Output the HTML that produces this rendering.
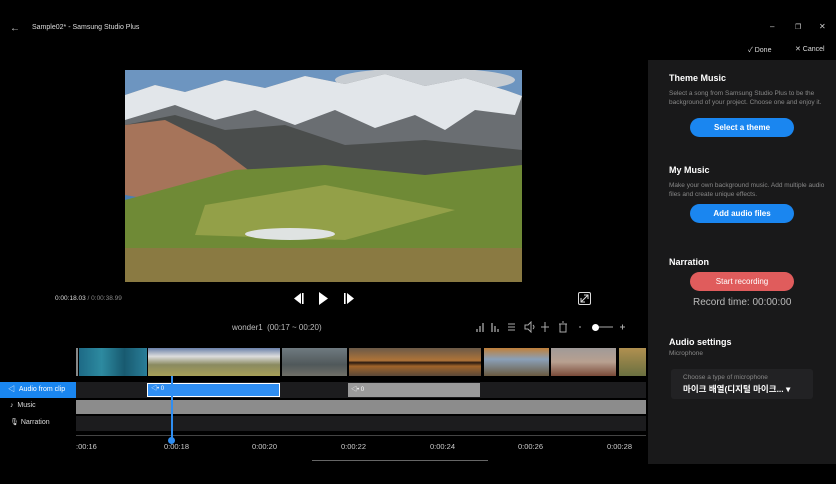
<!DOCTYPE html>
<html><head><meta charset="utf-8"><style>
*{margin:0;padding:0;box-sizing:border-box}
body{width:836px;height:484px;background:#000;font-family:"Liberation Sans","Noto Sans CJK KR",sans-serif;color:#ddd;position:relative;overflow:hidden;font-size:8px}
.a{position:absolute}
.btn{position:absolute;left:690px;width:104px;height:19px;border-radius:10px;background:#1a86f0;color:#fff;font-size:8px;text-align:center;line-height:19px;font-weight:bold}
.h{position:absolute;left:669px;font-size:9px;font-weight:bold;color:#fff}
.p{position:absolute;left:669px;font-size:6.5px;color:#888;line-height:9px;width:160px}
.thumb{position:absolute;top:348px;height:28px}
.tick{position:absolute;top:442px;font-size:7.5px;color:#ccc}
</style></head><body>
<div class="a" style="left:10px;top:23px;font-size:10px;color:#ccc">←</div>
<div class="a" style="left:32px;top:24px;font-size:7px;color:#ddd">Sample02* - Samsung Studio Plus</div>
<div class="a" style="left:770px;top:22px;font-size:8px;color:#ccc">–</div>
<div class="a" style="left:795px;top:23px;font-size:7px;color:#ccc">❐</div>
<div class="a" style="left:819px;top:22px;font-size:8px;color:#ccc">✕</div>
<div class="a" style="left:748px;top:45px;font-size:7px;color:#ddd">✓ Done</div>
<div class="a" style="left:795px;top:45px;font-size:7px;color:#ddd">✕ Cancel</div>

<!-- image -->
<div class="a" style="left:125px;top:70px;width:397px;height:212px;overflow:hidden;background:#4a7fb5">
<svg width="397" height="212" style="position:absolute;left:0;top:0">
<rect x="0" y="0" width="397" height="30" fill="#6d95c0"/>
<ellipse cx="300" cy="10" rx="90" ry="12" fill="#c8cdd2"/>
<polygon points="0,25 30,15 60,22 100,10 140,18 180,6 220,14 260,4 300,16 340,8 380,20 397,26 397,95 0,95" fill="#6a6e72"/>
<polygon points="0,25 30,15 60,22 100,10 140,18 180,6 220,14 260,4 300,16 340,8 380,20 397,26 390,45 350,40 320,60 290,45 250,58 210,40 170,55 130,40 90,50 50,35 0,50" fill="#e2e6ea"/>
<polygon points="0,55 50,45 100,60 160,55 220,75 300,70 397,80 397,110 0,110" fill="#4a4d4c"/>
<polygon points="0,55 40,50 90,75 130,105 60,135 0,125" fill="#a6745a"/>
<polygon points="0,130 110,100 200,95 300,105 397,95 397,212 0,212" fill="#6f8a36"/>
<polygon points="80,135 200,115 330,140 220,170 70,165" fill="#93a048"/>
<ellipse cx="165" cy="164" rx="45" ry="6" fill="#dfe3e2"/>
<rect x="0" y="178" width="397" height="34" fill="#8a7a42"/>
</svg></div>

<div class="a" style="left:55px;top:295px;font-size:6.5px;color:#ddd">0:00:18.03 <span style="color:#888">/ 0:00:38.99</span></div>
<svg class="a" style="left:292px;top:292px" width="64" height="13">
<polygon points="9,1 2,6.5 9,12" fill="#fff"/><rect x="10" y="1" width="1.6" height="11" fill="#fff"/>
<polygon points="27,0 36,6.5 27,13" fill="#fff"/>
<rect x="52" y="1" width="1.6" height="11" fill="#fff"/><polygon points="55,1 62,6.5 55,12" fill="#fff"/>
</svg>
<svg class="a" style="left:578px;top:292px" width="13" height="13"><rect x="0.5" y="0.5" width="12" height="12" rx="1.5" fill="none" stroke="#ddd"/><path d="M3,10 L10,3 M6,3 H10 V7 M3,6 V10 H7" stroke="#ddd" fill="none"/></svg>
<div class="a" style="left:232px;top:323px;font-size:8px;color:#bbb">wonder1 &nbsp;(00:17 ~ 00:20)</div>
<svg class="a" style="left:475px;top:321px" width="155" height="12" stroke="#aaa" fill="none">
<path d="M2,11V8 M5,11V5 M8,11V2" stroke-width="1.3"/>
<path d="M17,2V11 M20,5V11 M23,8V11" stroke-width="1.3"/>
<path d="M33,3H40 M33,6H40 M33,9H40"/>
<path d="M50,4H53L56,1V11L53,8H50Z M58,4Q60,6 58,8"/>
<path d="M70,1V11 M66,6H74"/>
<path d="M84,3H92 M85,3V11H91V3 M87,1H89"/>
<path d="M104,6H106"/>
<path d="M118,6H138"/>
<path d="M145,6H150 M147.5,3.5V8.5"/>
</svg>
<div class="a" style="left:592px;top:324px;width:7px;height:7px;border-radius:50%;background:#fff"></div>

<!-- thumbnails -->
<div class="thumb" style="left:76px;width:2px;background:#888"></div>
<div class="thumb" style="left:79px;width:68px;background:linear-gradient(90deg,#1d6a86,#2d8aa0,#185a70,#2a7e98)"></div>
<div class="thumb" style="left:148px;width:132px;background:linear-gradient(180deg,#6a80a8,#ddd 30%,#8a8a60 60%,#a8a058)"></div>
<div class="thumb" style="left:282px;width:65px;background:linear-gradient(180deg,#6f7a80,#50585a 60%,#707068)"></div>
<div class="thumb" style="left:349px;width:132px;background:linear-gradient(180deg,#6b5a48,#b07438 45%,#2a1a10 52%,#a0642a 65%,#5a4838)"></div>
<div class="thumb" style="left:484px;width:65px;background:linear-gradient(180deg,#c0803a,#8aa0b8 40%,#6a5a40)"></div>
<div class="thumb" style="left:551px;width:65px;background:linear-gradient(180deg,#a09a98,#b8a090 50%,#7a4a38)"></div>
<div class="thumb" style="left:619px;width:27px;background:linear-gradient(180deg,#b09050,#6a7040)"></div>

<!-- tracks -->
<div class="a" style="left:0;top:382px;width:76px;height:16px;background:#1a86f0;color:#fff;font-size:7px;line-height:16px;padding-left:8px">◁ &nbsp;Audio from clip</div>
<div class="a" style="left:76px;top:382px;width:570px;height:16px;background:#1c1c1e"></div>
<div class="a" style="left:147px;top:383px;width:133px;height:14px;background:#2f8ef2;border:1.5px solid #fff;font-size:6px;color:#fff;padding-left:3px;line-height:11px">◁• 0</div>
<div class="a" style="left:348px;top:383px;width:132px;height:14px;background:#9a9a9a;font-size:6px;color:#fff;padding-left:3px;line-height:14px">◁• 0</div>
<div class="a" style="left:10px;top:402px;font-size:7px;color:#ddd">♪ &nbsp;Music</div>
<div class="a" style="left:76px;top:400px;width:570px;height:14px;background:#8c8c8c"></div>
<div class="a" style="left:10px;top:418px;font-size:7px;color:#ddd">🎙 Narration</div>
<div class="a" style="left:76px;top:416px;width:570px;height:15px;background:#1c1c1e"></div>
<div class="a" style="left:76px;top:435px;width:570px;height:1px;background:#444"></div>
<div class="tick" style="left:76px">:00:16</div>
<div class="tick" style="left:164px">0:00:18</div>
<div class="tick" style="left:252px">0:00:20</div>
<div class="tick" style="left:341px">0:00:22</div>
<div class="tick" style="left:430px">0:00:24</div>
<div class="tick" style="left:518px">0:00:26</div>
<div class="tick" style="left:607px">0:00:28</div>
<div class="a" style="left:171px;top:376px;width:1.5px;height:66px;background:#2f8ef2"></div>
<div class="a" style="left:168px;top:437px;width:7px;height:7px;border-radius:50%;background:#2f8ef2"></div>
<div class="a" style="left:312px;top:460px;width:176px;height:1px;background:#666"></div>

<!-- right panel -->
<div class="a" style="left:648px;top:60px;width:188px;height:404px;background:#19191a"></div>
<div class="h" style="top:73px">Theme Music</div>
<div class="p" style="top:89px">Select a song from Samsung Studio Plus to be the background of your project. Choose one and enjoy it.</div>
<div class="btn" style="top:118px">Select a theme</div>
<div class="h" style="top:165px">My Music</div>
<div class="p" style="top:181px">Make your own background music. Add multiple audio files and create unique effects.</div>
<div class="btn" style="top:204px">Add audio files</div>
<div class="h" style="top:257px">Narration</div>
<div class="btn" style="top:272px;background:#e05c5c;font-weight:normal">Start recording</div>
<div class="a" style="left:693px;top:297px;font-size:10px;color:#bbb">Record time: 00:00:00</div>
<div class="h" style="top:337px">Audio settings</div>
<div class="p" style="top:349px">Microphone</div>
<div class="a" style="left:671px;top:369px;width:142px;height:30px;background:#222224;border-radius:3px"></div>
<div class="a" style="left:683px;top:374px;font-size:6.5px;color:#888">Choose a type of microphone</div>
<div class="a" style="left:683px;top:383px;font-size:8.5px;color:#fff;font-weight:bold">마이크 배열(디지털 마이크... ▾</div>
</body></html>
